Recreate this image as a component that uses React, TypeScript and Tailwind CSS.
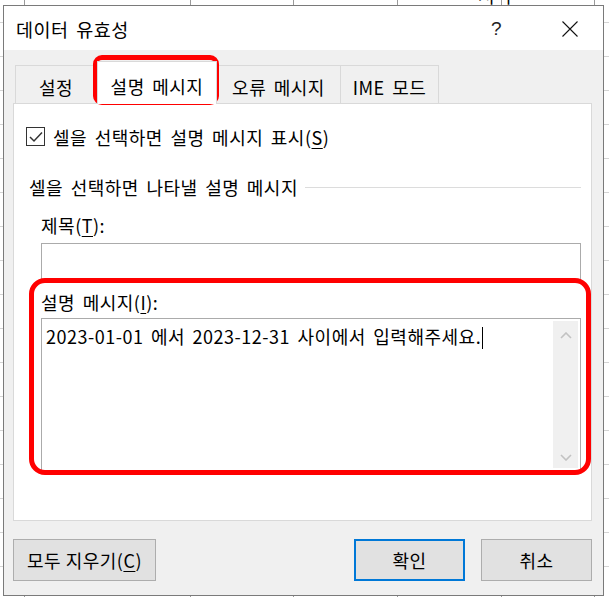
import React from "react";

const ROWS = Array.from({ length: 18 });
const COLS = [25, 166, 103, 104, 104, 93, 20];

type MnemonicProps = { label: string; hotkey: string; suffix?: string };

const Mnemonic: React.FC<MnemonicProps> = ({ label, hotkey, suffix = "" }) => (
  <span>
    {label}(<span className="underline underline-offset-[3px]">{hotkey}</span>){suffix}
  </span>
);

const Sheet: React.FC = () => (
  <>
    <div className="absolute inset-0 flex flex-col">
      <div className="h-[23px] shrink-0 border-b border-[#d4d4d4]" />
      {ROWS.map((_, i) => (
        <div key={i} className="h-[34px] shrink-0 border-b border-[#d4d4d4]" />
      ))}
    </div>
    <div className="absolute inset-0 flex">
      {COLS.map((w, i) => (
        <div
          key={i}
          className="h-full shrink-0 border-r border-[#9a9a9a]"
          style={{ width: w }}
        />
      ))}
    </div>
    <span className="absolute left-[478px] top-[-17px] text-[18px] leading-[24px] text-black">
      서식
    </span>
  </>
);

const Tab: React.FC<{ label: string; width: number; active?: boolean }> = ({
  label,
  width,
  active,
}) =>
  active ? (
    <div
      className="relative z-10 -mb-px flex h-[43px] shrink-0 items-start justify-center border border-b-0 border-[#d9d9d9] bg-white pt-[12px] leading-[24px]"
      style={{ width }}
    >
      {label}
    </div>
  ) : (
    <div
      className="-ml-px flex h-[38px] shrink-0 items-start justify-center border border-b-0 border-[#d9d9d9] bg-[#f0f0f0] pt-[9px] leading-[24px] first:ml-0"
      style={{ width }}
    >
      {label}
    </div>
  );

const Button: React.FC<{ children: React.ReactNode; width: number; primary?: boolean }> = ({
  children,
  width,
  primary,
}) => (
  <button
    className={
      primary
        ? "flex h-[42px] items-center justify-center border-2 border-[#0078d7] bg-[#e1e1e1] leading-[24px]"
        : "flex h-[42px] items-center justify-center border border-[#adadad] bg-[#e1e1e1] leading-[24px]"
    }
    style={{ width }}
  >
    {children}
  </button>
);

const Chevron: React.FC<{ up?: boolean }> = ({ up }) => (
  <svg width="12" height="7" viewBox="0 0 12 7" fill="none">
    <path
      d={up ? "M1 6 L6 1 L11 6" : "M1 1 L6 6 L11 1"}
      stroke="#c2c2c2"
      strokeWidth="1.6"
    />
  </svg>
);

export default function App() {
  return (
    <div className="relative h-[597px] w-[609px] overflow-hidden bg-white font-['Noto_Sans_CJK_KR','Noto_Sans',sans-serif] text-[18px] tracking-[0.5px] text-black [word-spacing:3px]">
      <Sheet />

      {/* dialog window */}
      <div className="absolute left-[3px] top-[5px] flex h-[591px] w-[601px] flex-col border border-[#7a7a7a] bg-[#f0f0f0]">
        <div className="flex h-[44px] shrink-0 items-center bg-white pl-[12px] pt-[2px]">
          <span className="text-[18.5px] leading-[24px]">데이터 유효성</span>
          <span className="ml-auto mr-[60px] font-['Liberation_Sans',sans-serif] text-[19px] leading-[24px] text-[#222]">
            ?
          </span>
          <svg width="16" height="16" viewBox="0 0 16 16" className="mr-[25px]">
            <path d="M0.5 0.5 L15.5 15.5 M15.5 0.5 L0.5 15.5" stroke="#111" strokeWidth="1.1" />
          </svg>
        </div>

        <div className="flex flex-1 flex-col pl-[9px] pr-[11px]">
          <div className="mt-[11px] flex h-[42px] items-end pl-[2px]">
            <Tab label="설정" width={82} />
            <Tab label="설명 메시지" width={120} active />
            <Tab label="오류 메시지" width={125} />
            <Tab label="IME 모드" width={99} />
          </div>

          <div className="flex h-[418px] flex-col border border-[#d9d9d9] bg-white">
            <div className="mt-[22px] flex h-[21px] items-center pl-[12px]">
              <div className="flex h-[19px] w-[19px] items-center justify-center border border-[#333]">
                <svg width="14" height="12" viewBox="0 0 14 12" fill="none">
                  <path d="M1 6 L5 10 L13 1.5" stroke="#333" strokeWidth="1.5" />
                </svg>
              </div>
              <span className="ml-[8px] leading-[24px]">
                <Mnemonic label="셀을 선택하면 설명 메시지 표시" hotkey="S" />
              </span>
            </div>

            <div className="mt-[28px] flex h-[24px] items-center pl-[15px] pr-[10px]">
              <span className="leading-[24px]">셀을 선택하면 나타낼 설명 메시지</span>
              <div className="ml-[7px] h-px flex-1 bg-[#dcdcdc]" />
            </div>

            <div className="ml-[27px] mt-[14px] h-[24px] leading-[24px]">
              <Mnemonic label="제목" hotkey="T" suffix=":" />
            </div>
            <div className="ml-[27px] mt-[6px] h-[38px] w-[540px] border border-[#ababab] bg-white" />

            <div className="ml-[27px] mt-[9px] h-[24px] leading-[24px]">
              <Mnemonic label="설명 메시지" hotkey="I" suffix=":" />
            </div>
            <div className="ml-[27px] mt-[4px] flex h-[153px] w-[540px] border border-[#ababab] bg-white p-[2px]">
              <div className="flex-1 pl-[2px] pt-[1px] leading-[24px]">
                2023-01-01 에서 2023-12-31 사이에서 입력해주세요.
                <span className="ml-px inline-block h-[22px] w-px translate-y-[5px] bg-black" />
              </div>
              <div className="flex w-[25px] flex-col items-center justify-between bg-[#f0f0f0] pb-[7px] pt-[11px]">
                <Chevron up />
                <Chevron />
              </div>
            </div>
          </div>

          <div className="mt-[18px] flex items-center">
            <Button width={143}>
              <Mnemonic label="모두 지우기" hotkey="C" />
            </Button>
            <div className="ml-auto flex gap-[16px]">
              <Button width={111} primary>
                확인
              </Button>
              <Button width={111}>취소</Button>
            </div>
          </div>
        </div>
      </div>

      {/* red highlight marks */}
      <div className="absolute left-[93px] top-[55px] h-[50px] w-[126px] rounded-[9px] border-[5px] border-[#ff0000]" />
      <div className="absolute left-[29px] top-[278px] h-[197px] w-[562px] rounded-[16px] border-[5px] border-[#ff0000]" />
    </div>
  );
}
